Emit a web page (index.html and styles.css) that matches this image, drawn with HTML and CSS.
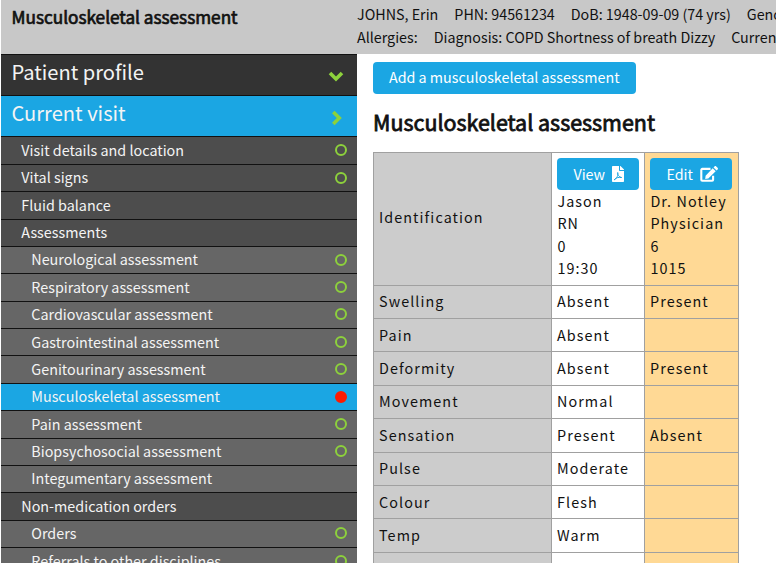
FILE: index.html
```
<!DOCTYPE html>
<html lang="en">
<head>
<meta charset="utf-8">
<title>Musculoskeletal assessment</title>
<link rel="stylesheet" href="styles.css">
</head>
<body>
<header class="topbar">
  <div class="page-name">Musculoskeletal assessment</div>
  <div class="patient">
    <div class="patient-line"><span>JOHNS, Erin</span><span>PHN: 94561234</span><span>DoB: 1948-09-09 (74 yrs)</span><span>Gender:</span></div>
    <div class="patient-line"><span>Allergies:</span><span>Diagnosis: COPD Shortness of breath Dizzy</span><span>Current</span></div>
  </div>
</header>
<div class="layout">
  <nav class="sidebar">
    <div class="section"><span>Patient profile</span><svg class="chevron" viewBox="0 0 16 16"><path d="M2 5 8 11l6-6"/></svg></div>
    <div class="section current"><span>Current visit</span><svg class="chevron right" viewBox="0 0 16 16"><path d="M5.3 2 11.3 8l-6 6"/></svg></div>
    <ul class="menu">
      <li class="item">Visit details and location<i class="status"></i></li>
      <li class="item">Vital signs<i class="status"></i></li>
      <li class="item">Fluid balance</li>
      <li class="item">Assessments</li>
      <li class="item sub">Neurological assessment<i class="status"></i></li>
      <li class="item sub">Respiratory assessment<i class="status"></i></li>
      <li class="item sub">Cardiovascular assessment<i class="status"></i></li>
      <li class="item sub">Gastrointestinal assessment<i class="status"></i></li>
      <li class="item sub">Genitourinary assessment<i class="status"></i></li>
      <li class="item sub active">Musculoskeletal assessment<i class="status"></i></li>
      <li class="item sub">Pain assessment<i class="status"></i></li>
      <li class="item sub">Biopsychosocial assessment<i class="status"></i></li>
      <li class="item sub">Integumentary assessment</li>
      <li class="item">Non-medication orders</li>
      <li class="item sub">Orders<i class="status"></i></li>
      <li class="item sub">Referrals to other disciplines<i class="status"></i></li>
    </ul>
  </nav>
  <main class="content">
    <button class="btn add">Add a musculoskeletal assessment</button>
    <h1>Musculoskeletal assessment</h1>
    <table class="results">
      <colgroup><col class="c-label"><col class="c-first"><col class="c-second"></colgroup>
      <tr class="ident">
        <th>Identification</th>
        <td><button class="btn">View <svg class="icon-pdf" viewBox="0 0 384 512"><path fill="#fff" fill-rule="evenodd" d="M224 136V0H24C11 0 0 11 0 24v464c0 13 11 24 24 24h336c13 0 24-11 24-24V160H248c-13 0-24-11-24-24zM384 122v6H256V0h6c6 0 12 3 17 7l98 98c4 5 7 11 7 17z"/><path fill="none" stroke="#1ba6e3" stroke-width="32" stroke-linejoin="round" d="M180 210c-22 70 50 145 128 158M184 208c30 70-30 195-114 235 50-75 145-88 238-75"/></svg></button>Jason<br>RN<br>0<br>19:30</td>
        <td><button class="btn">Edit <svg class="icon-edit" viewBox="0 0 18 16"><path d="M10.5 2.9H2.3a1 1 0 0 0-1 1v9.8a1 1 0 0 0 1 1h9.8a1 1 0 0 0 1-1v-4" fill="none" stroke="#fff" stroke-width="2.1"/><path fill="#fff" d="m12.7 2.2 3 3-7.4 7.3-3.1.4.4-3.2zM13.5 1.4l1-1c.5-.5 1.2-.5 1.7 0l1.4 1.4c.5.5.5 1.2 0 1.7l-1 1z"/></svg></button>Dr. Notley<br>Physician<br>6<br>1015</td>
      </tr>
      <tr><th>Swelling</th><td>Absent</td><td>Present</td></tr>
      <tr><th>Pain</th><td>Absent</td><td></td></tr>
      <tr><th>Deformity</th><td>Absent</td><td>Present</td></tr>
      <tr><th>Movement</th><td>Normal</td><td></td></tr>
      <tr><th>Sensation</th><td>Present</td><td>Absent</td></tr>
      <tr><th>Pulse</th><td>Moderate</td><td></td></tr>
      <tr><th>Colour</th><td>Flesh</td><td></td></tr>
      <tr><th>Temp</th><td>Warm</td><td></td></tr>
      <tr><th></th><td></td><td></td></tr>
    </table>
  </main>
</div>
</body>
</html>
```
FILE: styles.css
```
* { box-sizing: border-box; }
body {
  margin: 0;
  height: 563px;
  overflow: hidden;
  background: #fff;
  color: #111;
  font: 14.35px/22.4px "Noto Sans CJK SC", "Noto Sans", sans-serif;
}
.topbar {
  display: flex;
  height: 54px;
  margin-left: 1px;
  background: #c8c8c8;
  overflow: hidden;
}
.page-name {
  flex: 0 0 356px;
  padding: 4px 0 0 10.5px;
  font-size: 17.2px;
  line-height: 25px;
  -webkit-text-stroke: 0.7px #111;
}
.patient { padding-top: 3px; font-size: 14.3px; line-height: 22.6px; white-space: nowrap; }
.patient-line { display: flex; gap: 16px; }
.layout { display: flex; }
.sidebar {
  flex: 0 0 356px;
  margin-left: 1px;
  height: 509px;
  overflow: hidden;
  color: #f4f4f4;
}
.section {
  display: flex;
  justify-content: space-between;
  height: 41.2px;
  padding: 1px 13.5px 0 10.5px;
  border-top: 1px solid #111;
  background: #333;
  font-size: 20.1px;
  line-height: 32px;
}
.current { background: #1ba6e3; }
.chevron {
  width: 16px;
  height: 16px;
  margin-top: 12px;
  fill: none;
  stroke: #8dd13c;
  stroke-width: 3.6;
}
.chevron.right { margin-top: 13px; }
.menu { margin: 0; padding: 0; list-style: none; }
.item {
  display: flex;
  justify-content: space-between;
  align-items: center;
  height: 27.38px;
  padding: 0 10px 0.8px 20.3px;
  border-top: 1px solid #111;
  background: #4d4d4d;
}
.sub { padding-left: 30.3px; background: #666; }
.active { background: #1ba6e3; }
.status {
  width: 12px;
  height: 12px;
  border: 2px solid #8dd13c;
  border-radius: 50%;
}
.active .status { border-color: #ff1a00; background: #ff1a00; }
.content { padding: 8px 0 0 16px; }
.btn {
  display: flex;
  align-items: center;
  gap: 7px;
  height: 32px;
  padding: 0 16px 1px;
  border: 0;
  border-radius: 4px;
  background: #1ba6e3;
  color: #fff;
  font: inherit;
  letter-spacing: 0;
}
.results .btn { padding: 0 0 0 16px; }
.add { width: 263px; font-size: 14.3px; white-space: nowrap; }
h1 {
  margin: 12px 0 15px;
  font-size: 21.45px;
  font-weight: 400;
  line-height: 31px;
  -webkit-text-stroke: 0.8px #111;
}
.results {
  width: 365px;
  table-layout: fixed;
  border-collapse: collapse;
  letter-spacing: 1.08px;
}
.c-label { width: 178px; }
.c-first { width: 93px; }
.c-second { width: 94px; }
.results th, .results td {
  height: 33.4px;
  padding: 4.5px 5px 5.5px;
  border: 1px solid #a0a0a0;
  font-weight: 400;
  text-align: left;
  white-space: nowrap;
}
.results th { background: #ccc; }
.results td:nth-child(3) { background: #ffd995; }
.results .ident > * { height: 132.5px; }
.results .ident > td { padding: 5px 5px 5px 5.4px; }
.results .ident > th { padding-bottom: 8px; }
.results td .btn { width: 82px; }
.icon-pdf { width: 12px; height: 16px; }
.icon-edit { width: 18px; height: 16px; flex: none; }
```
